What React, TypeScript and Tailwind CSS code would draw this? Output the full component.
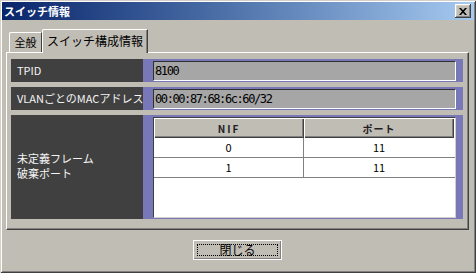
export default function App() {
  return (
    <div className="w-[476px] h-[273px] bg-[#c0bdb5] p-[2px] flex flex-col font-['Noto_Sans_CJK_JP',sans-serif] shadow-[inset_1px_1px_0_#d4d0c8,inset_-1px_-1px_0_#404040,inset_2px_2px_0_#ffffff,inset_-2px_-2px_0_#808080] overflow-hidden">
      {/* Title bar */}
      <div className="h-[18px] flex items-center justify-between bg-linear-to-r from-[#0a246a] to-[#a6caf0]">
        <span className="pl-[2px] text-white font-bold text-[11px] leading-none">スイッチ情報</span>
        <div className="mr-[3px] w-[16px] h-[14px] bg-[#c0bdb5] flex items-center justify-center shadow-[inset_-1px_-1px_0_#404040,inset_1px_1px_0_#ffffff,inset_-2px_-2px_0_#808080,inset_2px_2px_0_#d4d0c8]">
          <svg width="8" height="7" viewBox="0 0 8 7">
            <path d="M0 0 L2 0 L4 2.3 L6 0 L8 0 L5 3.5 L8 7 L6 7 L4 4.7 L2 7 L0 7 L3 3.5 Z" fill="#000" />
          </svg>
        </div>
      </div>

      {/* Tabs */}
      <div className="mt-[9px] ml-[4px] h-[23px] flex items-end pl-[3px] relative z-10">
        <div className="w-[33px] h-[20px] border-t border-l border-white border-r border-r-[#404040] rounded-tl-[2px] flex items-center justify-center text-[11px] text-black leading-none">
          全般
        </div>
        <div className="w-[106px] h-[24px] -mb-[1px] bg-[#c0bdb5] border-t border-l border-white border-r border-r-[#404040] shadow-[inset_-1px_0_0_#808080] rounded-tl-[2px] flex items-center justify-center text-[12px] text-black leading-none pb-[1px]">
          スイッチ構成情報
        </div>
      </div>

      {/* Panel */}
      <div className="ml-[4px] w-[463px] h-[178px] border-t border-l border-white border-r border-b border-r-[#404040] border-b-[#404040] shadow-[inset_-1px_-1px_0_#808080]">
        <div className="ml-[4px] mt-[6px] w-[452px] flex flex-col gap-[5px]">
          {/* TPID */}
          <div className="flex h-[23px]">
            <div className="w-[132px] bg-[#404040] text-[#f4f4f4] text-[11px] pl-[6px] flex items-center">TPID</div>
            <div className="flex-1 bg-[#7878b8] pl-[10px] pr-[7px] flex items-center">
              <div className="w-full h-[20px] bg-[#a6a6a6] border-t border-l border-[#303030] border-b border-r border-b-white border-r-white flex items-center pl-[1px] font-['DejaVu_Sans_Mono',monospace] text-[12px] tracking-[-1.4px] text-black">
                8100
              </div>
            </div>
          </div>
          {/* VLAN */}
          <div className="flex h-[23px]">
            <div className="w-[132px] bg-[#404040] text-[#f4f4f4] text-[11px] pl-[6px] flex items-center whitespace-nowrap">VLANごとのMACアドレス</div>
            <div className="flex-1 bg-[#7878b8] pl-[10px] pr-[7px] flex items-center">
              <div className="w-full h-[20px] bg-[#a6a6a6] border-t border-l border-[#303030] border-b border-r border-b-white border-r-white flex items-center pl-[1px] font-['DejaVu_Sans_Mono',monospace] text-[12px] tracking-[-1.4px] text-black">
                00:00:87:68:6c:60/32
              </div>
            </div>
          </div>
          {/* Table row */}
          <div className="flex h-[104px]">
            <div className="w-[132px] bg-[#404040] text-[#f4f4f4] text-[11px] leading-[15px] pl-[6px] flex flex-col justify-center pb-[3px]">
              <span>未定義フレーム</span>
              <span>破棄ポート</span>
            </div>
            <div className="flex-1 bg-[#7878b8] pl-[10px] pr-[7px] pt-[2px] pb-[1px]">
              <div className="w-[303px] h-[101px] bg-white border-t border-l border-[#404040] border-r border-b border-r-[#d4d0c8] border-b-[#d4d0c8]">
                <div className="flex h-[20px]">
                  <div className="w-[150px] bg-[#c0bdb5] shadow-[inset_1px_1px_0_#ffffff,inset_-1px_-1px_0_#404040,inset_-2px_-2px_0_#808080] flex items-center justify-center text-[10px] font-bold tracking-[2px] text-[#202020]">
                    NIF
                  </div>
                  <div className="w-[150px] bg-[#c0bdb5] shadow-[inset_1px_1px_0_#ffffff,inset_-1px_-1px_0_#404040,inset_-2px_-2px_0_#808080] flex items-center justify-center text-[10px] font-bold tracking-[1px] text-[#202020]">
                    ポート
                  </div>
                </div>
                {[
                  ["0", "11"],
                  ["1", "11"],
                ].map(([a, b], i) => (
                  <div key={i} className="flex h-[20px] border-b border-[#808080]">
                    <div className="w-[150px] border-r border-[#808080] flex items-center justify-center text-[11px] text-black">{a}</div>
                    <div className="w-[150px] flex items-center justify-center text-[11px] text-black">{b}</div>
                  </div>
                ))}
              </div>
            </div>
          </div>
        </div>
      </div>

      {/* Button */}
      <div className="mt-[10px] flex justify-center pr-[1px]">
        <div className="w-[89px] h-[20px] bg-[#c0bdb5] border-t border-l border-white border-r border-b border-black shadow-[inset_-1px_-1px_0_#808080] p-[3px]">
          <div className="w-full h-full border border-dotted border-black flex items-center justify-center text-[12px] text-black leading-none">
            閉じる
          </div>
        </div>
      </div>
    </div>
  );
}
